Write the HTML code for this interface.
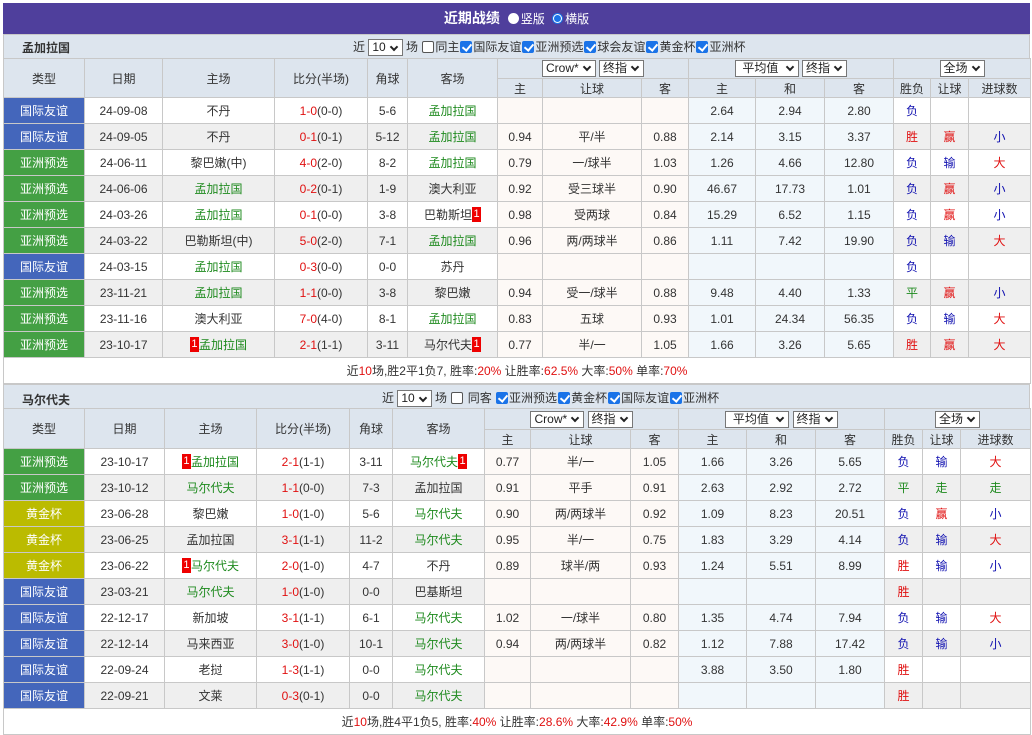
<!DOCTYPE html>
<html><head><meta charset="utf-8"><style>
*{margin:0;padding:0;box-sizing:border-box}
body{width:1032px;height:734px;background:#fff;font-family:"Liberation Sans","Noto Sans CJK SC",sans-serif;font-size:12px;color:#333;overflow:hidden;position:relative}
.title{position:absolute;left:3px;top:3px;width:1027px;height:31px;background:#4f3f9c;color:#fff;font-weight:bold;font-size:14px;text-align:center;line-height:31px}
.rad{display:inline-block;width:11px;height:11px;border-radius:50%;background:#fff;vertical-align:-1px;margin:0 2px 0 4px;position:relative}
.rad.on{background:#1a73e8}
.rad.on::after{content:"";position:absolute;left:2px;top:2px;width:7px;height:7px;border-radius:50%;background:#1a73e8;box-shadow:0 0 0 1px #fff}
.title .s{font-weight:normal;font-size:12px}
.sec{position:absolute;left:3px;width:1027px;height:25px;background:#dde5ee;border:1px solid #c8c8c8;border-bottom:none}
.sec .nm{position:absolute;left:18px;top:4px;font-weight:bold;font-size:12px}
.sec .ct{position:absolute;top:3px;white-space:nowrap}
.sel{display:inline-block;height:17px;border:1px solid #777;background:#fff;line-height:15px;padding:0 3px;font-size:12px;vertical-align:middle;color:#222}
.chev{display:inline-block;width:6px;height:6px;border-right:2px solid #222;border-bottom:2px solid #222;transform:rotate(45deg);margin:0 2px 3px 5px;vertical-align:middle}
.cb{display:inline-block;width:12px;height:12px;border:1px solid #555;border-radius:2px;background:#fff;vertical-align:-2px;margin:0 1px}
.cb.on{background:#1a73e8;border-color:#1a73e8;position:relative}
.cb.on::after{content:"";position:absolute;left:3px;top:0px;width:4px;height:7px;border-right:2px solid #fff;border-bottom:2px solid #fff;transform:rotate(40deg)}
table{position:absolute;left:3px;border-collapse:collapse;table-layout:fixed;width:1027px}
td,th{border:1px solid #c8c8c8;text-align:center;padding:0;font-weight:normal;white-space:nowrap;overflow:hidden}
th{background:#dde5ee;color:#333}
tr.d{height:26px}
tr.d:nth-child(even) td{background:#efefef}
tr.d td.h{background:#fdf9f6}
tr.d td.o{background:#f1f7fb}
tr.d td.t{color:#fff}
td.t.a{background:#4466bb!important}
td.t.y{background:#44a044!important}
td.t.j{background:#bbbb00!important}
.g{color:#1e8a1e}.r{color:#e01010}.b{color:#1010b0}
.n{display:inline-block;background:#e00;color:#fff;width:9px;height:15px;line-height:15px;font-size:11px;vertical-align:middle;margin-top:-2px}
tr.sum td{height:26px;background:#fff;text-align:center}
</style></head><body>
<div class="title">近期战绩 <span class="s"><span class="rad"></span>竖版 <span class="rad on"></span>横版</span></div>

<div class="sec" style="top:34px"><span class="nm">孟加拉国</span><span class="ct" style="left:349px">近 <span class="sel">10<span class="chev"></span></span> 场 <span class="cb"></span>同主<span class="cb on"></span>国际友谊<span class="cb on"></span>亚洲预选<span class="cb on"></span>球会友谊<span class="cb on"></span>黄金杯<span class="cb on"></span>亚洲杯</span></div>
<table style="top:58px">
<colgroup><col style="width:81px"><col style="width:78px"><col style="width:112px"><col style="width:93px"><col style="width:40px"><col style="width:90px"><col style="width:45px"><col style="width:99px"><col style="width:47px"><col style="width:67px"><col style="width:69px"><col style="width:69px"><col style="width:37px"><col style="width:38px"><col style="width:62px"></colgroup>
<tr style="height:20px"><th rowspan="2">类型</th><th rowspan="2">日期</th><th rowspan="2">主场</th><th rowspan="2">比分(半场)</th><th rowspan="2">角球</th><th rowspan="2">客场</th><th colspan="3"><span class="sel">Crow*<span class="chev"></span></span> <span class="sel">终指<span class="chev"></span></span></th><th colspan="3"><span class="sel">&nbsp;平均值 <span class="chev"></span></span> <span class="sel">终指<span class="chev"></span></span></th><th colspan="3"><span class="sel">全场<span class="chev"></span></span></th></tr>
<tr style="height:19px"><th>主</th><th>让球</th><th>客</th><th>主</th><th>和</th><th>客</th><th>胜负</th><th>让球</th><th>进球数</th></tr>
<tr class="d"><td class="t a">国际友谊</td><td>24-09-08</td><td>不丹</td><td><span class="r">1-0</span>(0-0)</td><td>5-6</td><td class="g">孟加拉国</td><td class="h"></td><td class="h"></td><td class="h"></td><td class="o">2.64</td><td class="o">2.94</td><td class="o">2.80</td><td class="b">负</td><td></td><td></td></tr>
<tr class="d"><td class="t a">国际友谊</td><td>24-09-05</td><td>不丹</td><td><span class="r">0-1</span>(0-1)</td><td>5-12</td><td class="g">孟加拉国</td><td class="h">0.94</td><td class="h">平/半</td><td class="h">0.88</td><td class="o">2.14</td><td class="o">3.15</td><td class="o">3.37</td><td class="r">胜</td><td class="r">赢</td><td class="b">小</td></tr>
<tr class="d"><td class="t y">亚洲预选</td><td>24-06-11</td><td>黎巴嫩(中)</td><td><span class="r">4-0</span>(2-0)</td><td>8-2</td><td class="g">孟加拉国</td><td class="h">0.79</td><td class="h">一/球半</td><td class="h">1.03</td><td class="o">1.26</td><td class="o">4.66</td><td class="o">12.80</td><td class="b">负</td><td class="b">输</td><td class="r">大</td></tr>
<tr class="d"><td class="t y">亚洲预选</td><td>24-06-06</td><td class="g">孟加拉国</td><td><span class="r">0-2</span>(0-1)</td><td>1-9</td><td>澳大利亚</td><td class="h">0.92</td><td class="h">受三球半</td><td class="h">0.90</td><td class="o">46.67</td><td class="o">17.73</td><td class="o">1.01</td><td class="b">负</td><td class="r">赢</td><td class="b">小</td></tr>
<tr class="d"><td class="t y">亚洲预选</td><td>24-03-26</td><td class="g">孟加拉国</td><td><span class="r">0-1</span>(0-0)</td><td>3-8</td><td>巴勒斯坦<span class="n">1</span></td><td class="h">0.98</td><td class="h">受两球</td><td class="h">0.84</td><td class="o">15.29</td><td class="o">6.52</td><td class="o">1.15</td><td class="b">负</td><td class="r">赢</td><td class="b">小</td></tr>
<tr class="d"><td class="t y">亚洲预选</td><td>24-03-22</td><td>巴勒斯坦(中)</td><td><span class="r">5-0</span>(2-0)</td><td>7-1</td><td class="g">孟加拉国</td><td class="h">0.96</td><td class="h">两/两球半</td><td class="h">0.86</td><td class="o">1.11</td><td class="o">7.42</td><td class="o">19.90</td><td class="b">负</td><td class="b">输</td><td class="r">大</td></tr>
<tr class="d"><td class="t a">国际友谊</td><td>24-03-15</td><td class="g">孟加拉国</td><td><span class="r">0-3</span>(0-0)</td><td>0-0</td><td>苏丹</td><td class="h"></td><td class="h"></td><td class="h"></td><td class="o"></td><td class="o"></td><td class="o"></td><td class="b">负</td><td></td><td></td></tr>
<tr class="d"><td class="t y">亚洲预选</td><td>23-11-21</td><td class="g">孟加拉国</td><td><span class="r">1-1</span>(0-0)</td><td>3-8</td><td>黎巴嫩</td><td class="h">0.94</td><td class="h">受一/球半</td><td class="h">0.88</td><td class="o">9.48</td><td class="o">4.40</td><td class="o">1.33</td><td class="g">平</td><td class="r">赢</td><td class="b">小</td></tr>
<tr class="d"><td class="t y">亚洲预选</td><td>23-11-16</td><td>澳大利亚</td><td><span class="r">7-0</span>(4-0)</td><td>8-1</td><td class="g">孟加拉国</td><td class="h">0.83</td><td class="h">五球</td><td class="h">0.93</td><td class="o">1.01</td><td class="o">24.34</td><td class="o">56.35</td><td class="b">负</td><td class="b">输</td><td class="r">大</td></tr>
<tr class="d"><td class="t y">亚洲预选</td><td>23-10-17</td><td class="g"><span class="n">1</span>孟加拉国</td><td><span class="r">2-1</span>(1-1)</td><td>3-11</td><td>马尔代夫<span class="n">1</span></td><td class="h">0.77</td><td class="h">半/一</td><td class="h">1.05</td><td class="o">1.66</td><td class="o">3.26</td><td class="o">5.65</td><td class="r">胜</td><td class="r">赢</td><td class="r">大</td></tr>
<tr class="sum"><td colspan="15">近<span class="r">10</span>场,胜2平1负7, 胜率:<span class="r">20%</span> 让胜率:<span class="r">62.5%</span> 大率:<span class="r">50%</span> 单率:<span class="r">70%</span></td></tr>
</table>

<div class="sec" style="top:384px"><span class="nm" style="top:6px">马尔代夫</span><span class="ct" style="left:378px;top:4px">近 <span class="sel">10<span class="chev"></span></span> 场 <span class="cb"></span> 同客 <span class="cb on"></span>亚洲预选<span class="cb on"></span>黄金杯<span class="cb on"></span>国际友谊<span class="cb on"></span>亚洲杯</span></div>
<table style="top:408px">
<colgroup><col style="width:81px"><col style="width:80px"><col style="width:92px"><col style="width:93px"><col style="width:43px"><col style="width:92px"><col style="width:46px"><col style="width:100px"><col style="width:48px"><col style="width:68px"><col style="width:69px"><col style="width:69px"><col style="width:38px"><col style="width:38px"><col style="width:70px"></colgroup>
<tr style="height:21px"><th rowspan="2">类型</th><th rowspan="2">日期</th><th rowspan="2">主场</th><th rowspan="2">比分(半场)</th><th rowspan="2">角球</th><th rowspan="2">客场</th><th colspan="3"><span class="sel">Crow*<span class="chev"></span></span> <span class="sel">终指<span class="chev"></span></span></th><th colspan="3"><span class="sel">&nbsp;平均值 <span class="chev"></span></span> <span class="sel">终指<span class="chev"></span></span></th><th colspan="3"><span class="sel">全场<span class="chev"></span></span></th></tr>
<tr style="height:19px"><th>主</th><th>让球</th><th>客</th><th>主</th><th>和</th><th>客</th><th>胜负</th><th>让球</th><th>进球数</th></tr>
<tr class="d"><td class="t y">亚洲预选</td><td>23-10-17</td><td class="g"><span class="n">1</span>孟加拉国</td><td><span class="r">2-1</span>(1-1)</td><td>3-11</td><td class="g">马尔代夫<span class="n">1</span></td><td class="h">0.77</td><td class="h">半/一</td><td class="h">1.05</td><td class="o">1.66</td><td class="o">3.26</td><td class="o">5.65</td><td class="b">负</td><td class="b">输</td><td class="r">大</td></tr>
<tr class="d"><td class="t y">亚洲预选</td><td>23-10-12</td><td class="g">马尔代夫</td><td><span class="r">1-1</span>(0-0)</td><td>7-3</td><td>孟加拉国</td><td class="h">0.91</td><td class="h">平手</td><td class="h">0.91</td><td class="o">2.63</td><td class="o">2.92</td><td class="o">2.72</td><td class="g">平</td><td class="g">走</td><td class="g">走</td></tr>
<tr class="d"><td class="t j">黄金杯</td><td>23-06-28</td><td>黎巴嫩</td><td><span class="r">1-0</span>(1-0)</td><td>5-6</td><td class="g">马尔代夫</td><td class="h">0.90</td><td class="h">两/两球半</td><td class="h">0.92</td><td class="o">1.09</td><td class="o">8.23</td><td class="o">20.51</td><td class="b">负</td><td class="r">赢</td><td class="b">小</td></tr>
<tr class="d"><td class="t j">黄金杯</td><td>23-06-25</td><td>孟加拉国</td><td><span class="r">3-1</span>(1-1)</td><td>11-2</td><td class="g">马尔代夫</td><td class="h">0.95</td><td class="h">半/一</td><td class="h">0.75</td><td class="o">1.83</td><td class="o">3.29</td><td class="o">4.14</td><td class="b">负</td><td class="b">输</td><td class="r">大</td></tr>
<tr class="d"><td class="t j">黄金杯</td><td>23-06-22</td><td class="g"><span class="n">1</span>马尔代夫</td><td><span class="r">2-0</span>(1-0)</td><td>4-7</td><td>不丹</td><td class="h">0.89</td><td class="h">球半/两</td><td class="h">0.93</td><td class="o">1.24</td><td class="o">5.51</td><td class="o">8.99</td><td class="r">胜</td><td class="b">输</td><td class="b">小</td></tr>
<tr class="d"><td class="t a">国际友谊</td><td>23-03-21</td><td class="g">马尔代夫</td><td><span class="r">1-0</span>(1-0)</td><td>0-0</td><td>巴基斯坦</td><td class="h"></td><td class="h"></td><td class="h"></td><td class="o"></td><td class="o"></td><td class="o"></td><td class="r">胜</td><td></td><td></td></tr>
<tr class="d"><td class="t a">国际友谊</td><td>22-12-17</td><td>新加坡</td><td><span class="r">3-1</span>(1-1)</td><td>6-1</td><td class="g">马尔代夫</td><td class="h">1.02</td><td class="h">一/球半</td><td class="h">0.80</td><td class="o">1.35</td><td class="o">4.74</td><td class="o">7.94</td><td class="b">负</td><td class="b">输</td><td class="r">大</td></tr>
<tr class="d"><td class="t a">国际友谊</td><td>22-12-14</td><td>马来西亚</td><td><span class="r">3-0</span>(1-0)</td><td>10-1</td><td class="g">马尔代夫</td><td class="h">0.94</td><td class="h">两/两球半</td><td class="h">0.82</td><td class="o">1.12</td><td class="o">7.88</td><td class="o">17.42</td><td class="b">负</td><td class="b">输</td><td class="b">小</td></tr>
<tr class="d"><td class="t a">国际友谊</td><td>22-09-24</td><td>老挝</td><td><span class="r">1-3</span>(1-1)</td><td>0-0</td><td class="g">马尔代夫</td><td class="h"></td><td class="h"></td><td class="h"></td><td class="o">3.88</td><td class="o">3.50</td><td class="o">1.80</td><td class="r">胜</td><td></td><td></td></tr>
<tr class="d"><td class="t a">国际友谊</td><td>22-09-21</td><td>文莱</td><td><span class="r">0-3</span>(0-1)</td><td>0-0</td><td class="g">马尔代夫</td><td class="h"></td><td class="h"></td><td class="h"></td><td class="o"></td><td class="o"></td><td class="o"></td><td class="r">胜</td><td></td><td></td></tr>
<tr class="sum"><td colspan="15">近<span class="r">10</span>场,胜4平1负5, 胜率:<span class="r">40%</span> 让胜率:<span class="r">28.6%</span> 大率:<span class="r">42.9%</span> 单率:<span class="r">50%</span></td></tr>
</table>
</body></html>
